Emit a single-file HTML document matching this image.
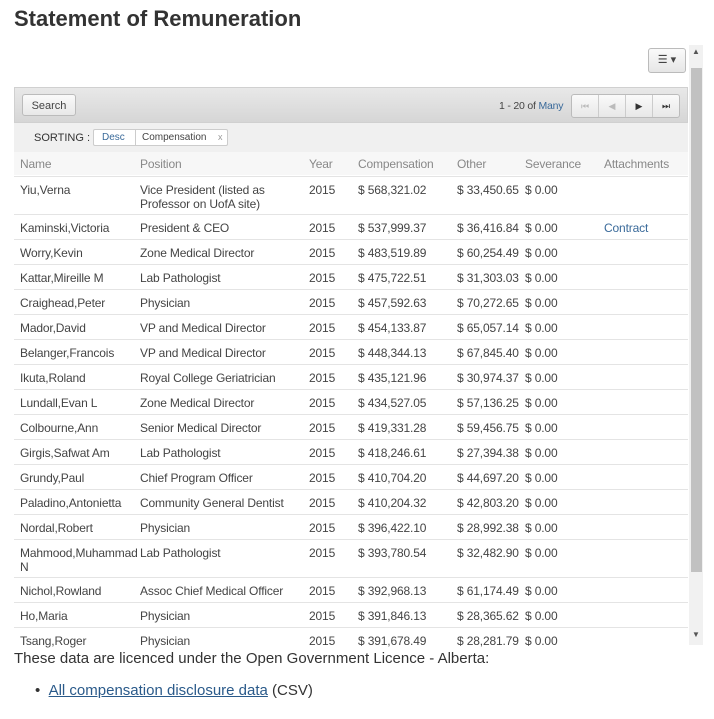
<!DOCTYPE html><html><head><style>
body{margin:0;background:#fff;font-family:"Liberation Sans",sans-serif;width:714px;height:719px;overflow:hidden;position:relative;color:#444}
.a{position:absolute;white-space:nowrap}
h1{position:absolute;left:14px;top:6px;margin:0;font-size:22px;font-weight:bold;color:#333}
.row{position:absolute;left:14px;width:674px;border-top:1px solid #e4e4e4;font-size:12px;color:#444;letter-spacing:-0.15px}
.row span{position:absolute;top:6px;line-height:14px}
</style></head><body>
<h1>Statement of Remuneration</h1>
<div class="a" style="left:648px;top:48px;width:36px;height:23px;border:1px solid #bbb;border-radius:3px;background:linear-gradient(#fafafa,#e6e6e6);font-size:11px;text-align:center;line-height:23px">☰ ▾</div>
<div class="a" style="left:689px;top:45px;width:14px;height:600px;background:#f1f1f1"></div>
<div class="a" style="left:691px;top:68px;width:11px;height:504px;background:#c1c1c1"></div>
<div class="a" style="left:692px;top:47px;font-size:8px;color:#555">▲</div>
<div class="a" style="left:692px;top:630px;font-size:8px;color:#555">▼</div>
<div class="a" style="left:14px;top:87px;width:674px;height:36px;background:linear-gradient(#e8e8e8,#d6d6d6);border:1px solid #d0d0d0;box-sizing:border-box"></div>
<div class="a" style="left:22px;top:94px;width:54px;height:22px;border:1px solid #bbb;border-radius:3px;background:linear-gradient(#fafafa,#e8e8e8);font-size:11px;text-align:center;line-height:22px;color:#444;box-sizing:border-box">Search</div>
<div class="a" style="left:499px;top:100px;font-size:10.5px;color:#444;letter-spacing:-0.2px">1 - 20 of <span style="color:#3a6a9a">Many</span></div>
<div class="a" style="left:571px;top:94px;width:109px;height:24px;border:1px solid #bbb;border-radius:3px;background:linear-gradient(#fafafa,#e8e8e8);box-sizing:border-box;font-size:9px;display:flex">
<div style="flex:1;border-right:1px solid #ccc;text-align:center;line-height:22px;color:#bbb">⏮</div><div style="flex:1;border-right:1px solid #ccc;text-align:center;line-height:22px;color:#bbb">◀</div><div style="flex:1;border-right:1px solid #ccc;text-align:center;line-height:22px;color:#333">▶</div><div style="flex:1;text-align:center;line-height:22px;color:#333">⏭</div></div>
<div class="a" style="left:14px;top:123px;width:674px;height:29px;background:#f0f0f0"></div>
<div class="a" style="left:34px;top:132px;font-size:11px;color:#333">SORTING :</div>
<div class="a" style="left:93px;top:129px;width:135px;height:17px;border:1px solid #ccc;border-radius:2px;background:#fff;box-sizing:border-box;font-size:10px;line-height:15px"><span style="position:absolute;left:8px;color:#3a6a9a">Desc</span><span style="position:absolute;left:41px;top:0;height:15px;border-left:1px solid #ccc"></span><span style="position:absolute;left:48px;color:#444">Compensation</span><span style="position:absolute;left:124px;color:#999;font-size:9px">x</span></div>
<div class="row" style="top:152px;height:23px;background:#f7f7f7;border:none;color:#888">
<span style="left:6px;top:5px">Name</span><span style="left:126px;top:5px">Position</span><span style="left:295px;top:5px">Year</span><span style="left:344px;top:5px">Compensation</span><span style="left:443px;top:5px">Other</span><span style="left:511px;top:5px">Severance</span><span style="left:590px;top:5px">Attachments</span></div>
<div id="rows"></div>
<div class="a" style="left:14px;top:650px;font-size:15px;color:#333">These data are licenced under the Open Government Licence - Alberta:</div>
<div class="a" style="left:35px;top:682px;font-size:15px;color:#333">• &nbsp;<span style="color:#2a5a8a;text-decoration:underline">All compensation disclosure data</span> (CSV)</div>
<script>
var d=[["Yiu,Verna","Vice President (listed as<br>Professor on UofA site)","568,321.02","33,450.65",38],
["Kaminski,Victoria","President &amp; CEO","537,999.37","36,416.84",25,"Contract"],
["Worry,Kevin","Zone Medical Director","483,519.89","60,254.49"],
["Kattar,Mireille M","Lab Pathologist","475,722.51","31,303.03"],
["Craighead,Peter","Physician","457,592.63","70,272.65"],
["Mador,David","VP and Medical Director","454,133.87","65,057.14"],
["Belanger,Francois","VP and Medical Director","448,344.13","67,845.40"],
["Ikuta,Roland","Royal College Geriatrician","435,121.96","30,974.37"],
["Lundall,Evan L","Zone Medical Director","434,527.05","57,136.25"],
["Colbourne,Ann","Senior Medical Director","419,331.28","59,456.75"],
["Girgis,Safwat Am","Lab Pathologist","418,246.61","27,394.38"],
["Grundy,Paul","Chief Program Officer","410,704.20","44,697.20"],
["Paladino,Antonietta","Community General Dentist","410,204.32","42,803.20"],
["Nordal,Robert","Physician","396,422.10","28,992.38"],
["Mahmood,Muhammad<br>N","Lab Pathologist","393,780.54","32,482.90",38],
["Nichol,Rowland","Assoc Chief Medical Officer","392,968.13","61,174.49"],
["Ho,Maria","Physician","391,846.13","28,365.62"],
["Tsang,Roger","Physician","391,678.49","28,281.79"]];
var y=176,h="";
d.forEach(function(r){var ht=r[4]||25;if(y+ht>645)ht=645-y;
h+='<div class="row" style="top:'+y+'px;height:'+ht+'px"><span style="left:6px">'+r[0]+'</span><span style="left:126px">'+r[1]+'</span><span style="left:295px">2015</span><span style="left:344px">$ '+r[2]+'</span><span style="left:443px">$ '+r[3]+'</span><span style="left:511px">$ 0.00</span>'+(r[5]?'<span style="left:590px;color:#3a6a9a">'+r[5]+'</span>':'')+'</div>';
y+=r[4]||25;});
document.getElementById('rows').innerHTML=h;
</script>
</body></html>
